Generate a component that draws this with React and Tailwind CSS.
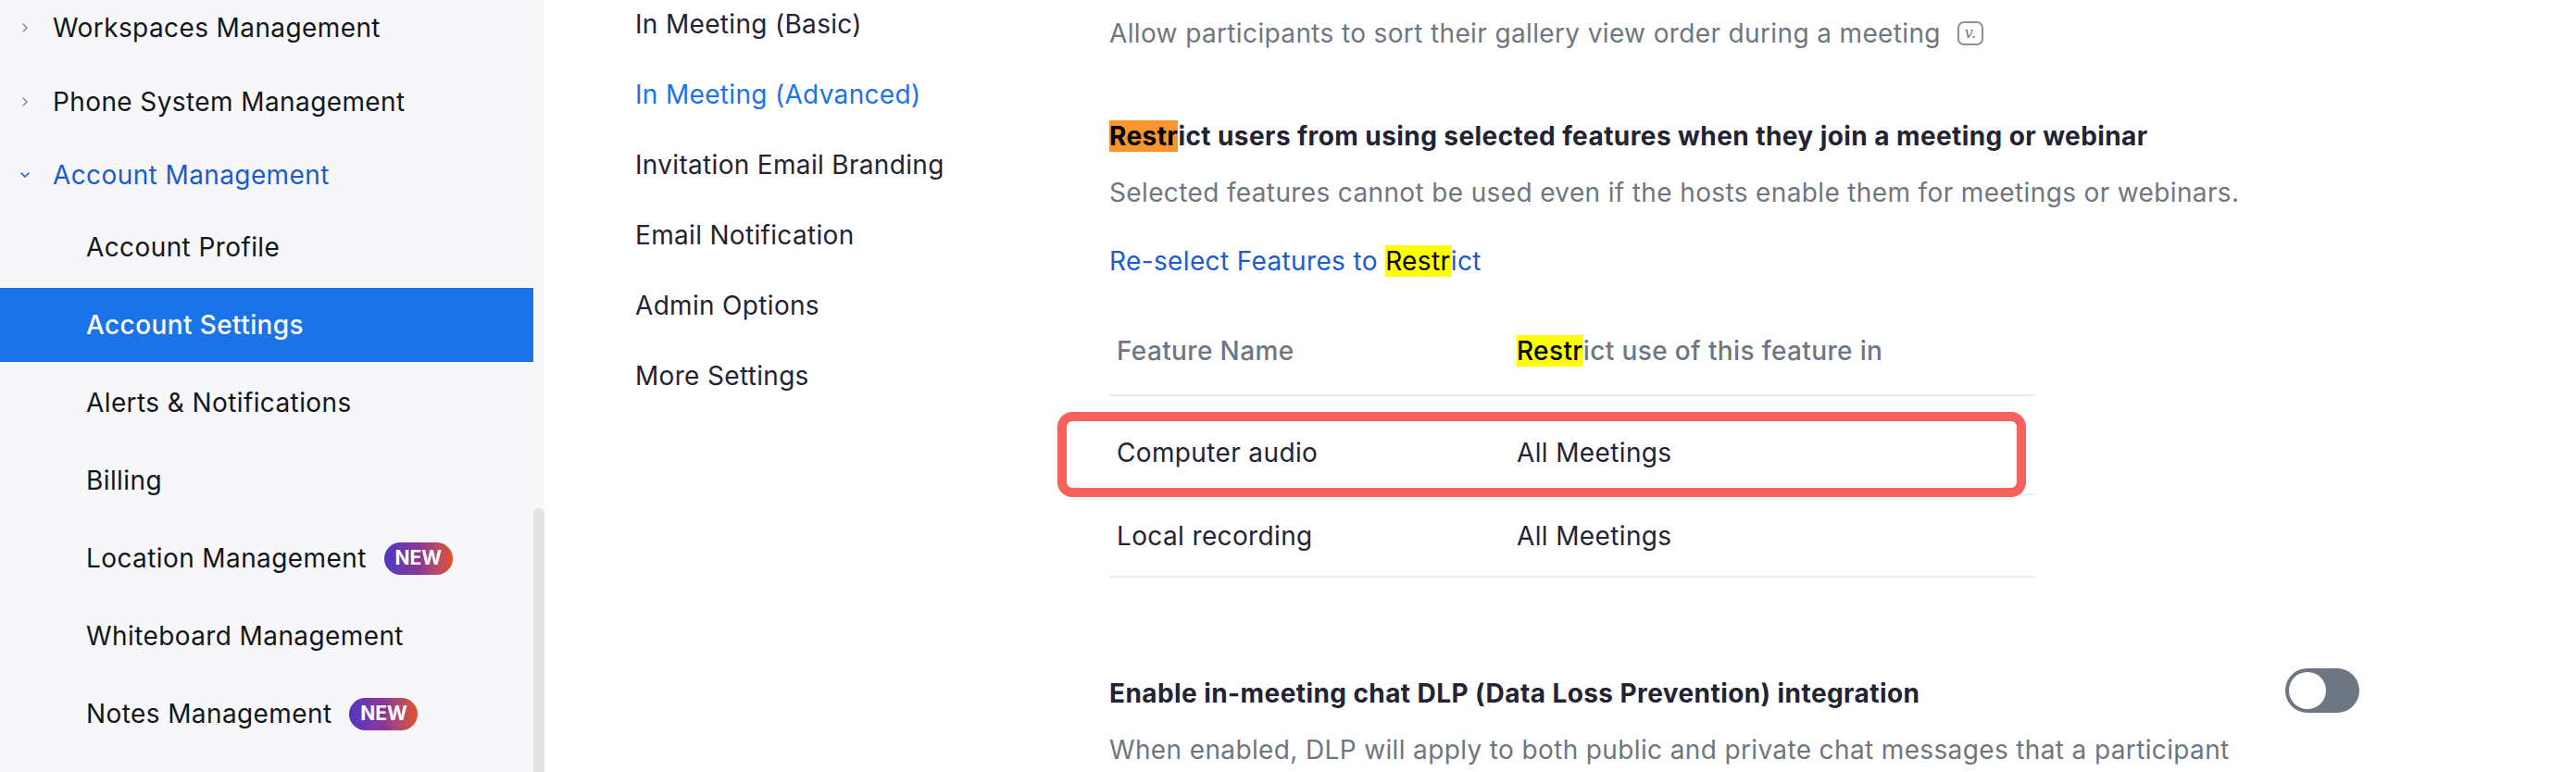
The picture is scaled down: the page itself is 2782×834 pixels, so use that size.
import React from "react";

// Sidebar entries: top-level groups, then the children of "Account Management"
const topGroups = [
  { label: "Workspaces Management", open: false },
  { label: "Phone System Management", open: false },
];

const accountItems = [
  { label: "Account Profile" },
  { label: "Account Settings", active: true },
  { label: "Alerts & Notifications" },
  { label: "Billing" },
  { label: "Location Management", badge: true },
  { label: "Whiteboard Management" },
  { label: "Notes Management", badge: true },
];

const settingTabs = [
  { label: "In Meeting (Basic)" },
  { label: "In Meeting (Advanced)", active: true },
  { label: "Invitation Email Branding" },
  { label: "Email Notification" },
  { label: "Admin Options" },
  { label: "More Settings" },
];

function Chevron({ down }) {
  return (
    <svg width="14" height="14" viewBox="0 0 14 14" fill="none" className="shrink-0">
      {down ? (
        <path d="M3 5l4 4 4-4" stroke="currentColor" strokeWidth="1.6" strokeLinecap="round" strokeLinejoin="round" />
      ) : (
        <path d="M5 3l4 4-4 4" stroke="currentColor" strokeWidth="1.6" strokeLinecap="round" strokeLinejoin="round" />
      )}
    </svg>
  );
}

function NewBadge() {
  return (
    <span className="ml-[19px] inline-flex h-[35px] w-[74px] items-center justify-center rounded-full bg-gradient-to-r from-[#4f35c4] via-[#8a3596] to-[#e1501c] text-[21px] font-bold tracking-normal text-white">
      NEW
    </span>
  );
}

function Mark({ color, children }) {
  return <span className={color === "orange" ? "bg-[#f8952d] text-black" : "bg-[#ffff00] text-black"}>{children}</span>;
}

export default function App() {
  return (
    <div className="flex h-[834px] w-[2782px] overflow-hidden bg-white font-['Inter',sans-serif] text-[#131619]">
      {/* Sidebar */}
      <aside className="flex w-[588px] shrink-0 bg-[#f7f7f9]">
        <nav className="-mt-[10px] flex w-[576px] flex-col tracking-[0.025em]">
          {topGroups.map((g) => (
            <div key={g.label} className="flex h-[80px] items-center pl-[20px] text-[28px]">
              <span className="flex w-[37px] text-[#8a8f98]">
                <Chevron />
              </span>
              {g.label}
            </div>
          ))}
          <div className="flex h-[77px] items-center pl-[20px] text-[28px] text-[#1a5bcf]">
            <span className="flex w-[37px]">
              <Chevron down />
            </span>
            Account Management
          </div>
          <div className="flex flex-col gap-[4px]">
            {accountItems.map((item) => (
              <div
                key={item.label}
                className={
                  item.active
                    ? "flex h-[80px] items-center bg-[#1a73e8] pl-[93px] text-[28px] font-medium text-white"
                    : "flex h-[80px] items-center pl-[93px] text-[28px]"
                }
              >
                {item.label}
                {item.badge && <NewBadge />}
              </div>
            ))}
          </div>
        </nav>
        <div className="w-[12px] pt-[549px]">
          <div className="h-full rounded-t-[6px] bg-[#e3e3e6]" />
        </div>
      </aside>

      {/* Settings tabs */}
      <div className="-mt-[12px] flex w-[562px] shrink-0 flex-col pl-[98px] tracking-[0.02em]">
        {settingTabs.map((t) => (
          <div
            key={t.label}
            className={
              t.active
                ? "flex h-[76px] items-center text-[28px] text-[#1a73e8]"
                : "flex h-[76px] items-center text-[28px] text-[#232333]"
            }
          >
            {t.label}
          </div>
        ))}
      </div>

      {/* Content */}
      <main className="flex flex-1 flex-col pl-[48px] pt-[16px] text-[28px] tracking-[0.013em]">
        <div className="flex h-[40px] items-center text-[#6e7680]">
          Allow participants to sort their gallery view order during a meeting
          <span className="ml-[18px] inline-flex h-[26px] w-[28px] items-center justify-center rounded-[7px] border-2 border-[#8a9099] font-['DejaVu_Serif',serif] text-[16px] italic tracking-normal text-[#6e7680]">
            v.
          </span>
        </div>

        <div className="mt-[71px] h-[40px] leading-[40px] font-bold tracking-[0.015em] text-[#232333]">
          <Mark color="orange">Restr</Mark>ict users from using selected features when they join a meeting or webinar
        </div>
        <div className="mt-[21px] h-[40px] leading-[40px] text-[#6e7680]">
          Selected features cannot be used even if the hosts enable them for meetings or webinars.
        </div>
        <div className="mt-[34px] h-[40px] leading-[40px] text-[#1a5bcf]">
          Re-select Features to <Mark>Restr</Mark>ict
        </div>

        {/* Restricted features table */}
        <div className="relative mt-[30px] w-[1000px]">
          <div className="flex h-[96px] items-center border-b-2 border-[#ededf1] px-[8px] font-medium text-[#6e7680]">
            <div className="w-[432px]">Feature Name</div>
            <div>
              <Mark>Restr</Mark>ict use of this feature in
            </div>
          </div>
          <div className="flex h-[107px] items-center border-b-2 border-[#ededf1] px-[8px] pt-[17px] text-[#232333]">
            <div className="w-[432px]">Computer audio</div>
            <div>All Meetings</div>
          </div>
          <div className="flex h-[89px] items-center border-b-2 border-[#ededf1] px-[8px] text-[#232333]">
            <div className="w-[432px]">Local recording</div>
            <div>All Meetings</div>
          </div>
          {/* annotation frame */}
          <div className="absolute left-[-56px] top-[113px] h-[92px] w-[1046px] rounded-[16px] border-[10px] border-[#f4625b]" />
        </div>

        <div className="mt-[105px] flex w-[1350px] items-start justify-between">
          <div className="w-[1230px]">
            <div className="h-[40px] leading-[40px] font-bold tracking-[0.015em] text-[#232333]">
              Enable in-meeting chat DLP (Data Loss Prevention) integration
            </div>
            <div className="mt-[21px] h-[40px] leading-[40px] text-[#6e7680]">
              When enabled, DLP will apply to both public and private chat messages that a participant
            </div>
          </div>
          <div className="-mt-[7px] flex h-[48px] w-[80px] shrink-0 items-center rounded-full bg-[#6e7781] pl-[4px]">
            <div className="h-[40px] w-[40px] rounded-full bg-white" />
          </div>
        </div>
      </main>
    </div>
  );
}
